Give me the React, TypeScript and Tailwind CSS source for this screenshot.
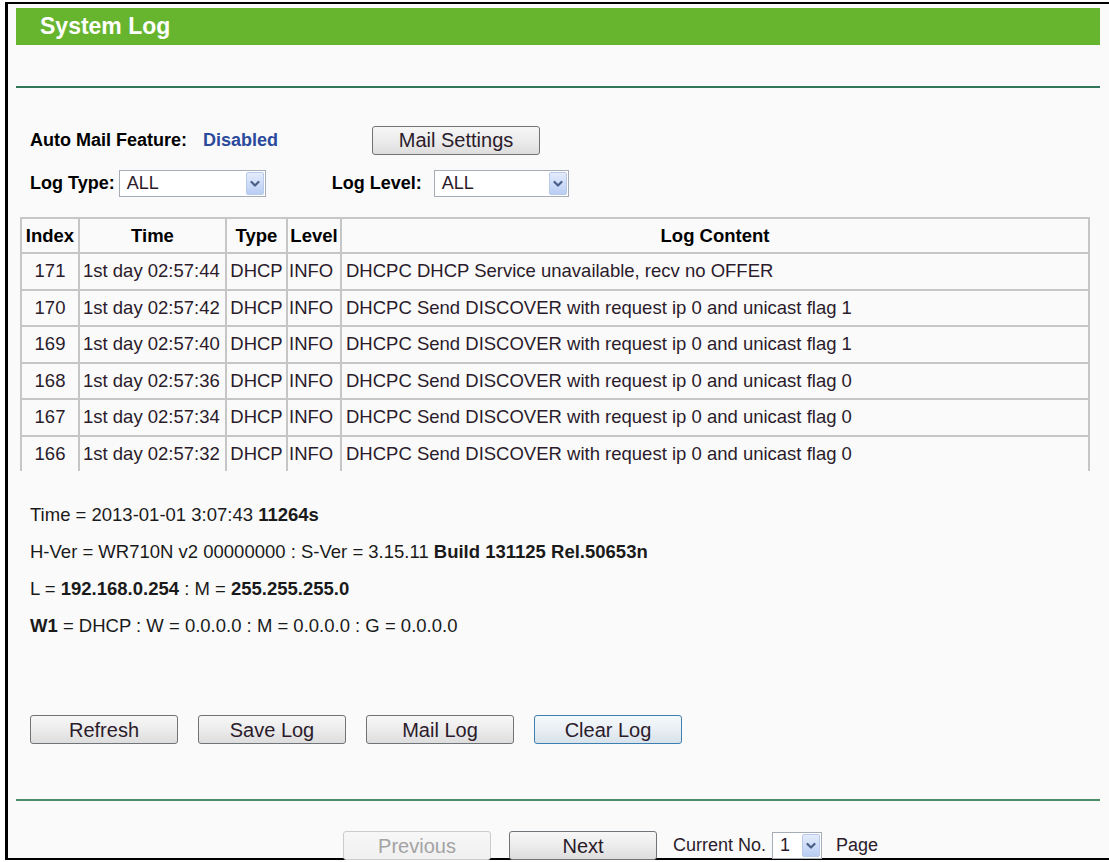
import React from 'react'

const rows = [
  { idx: '171', time: '1st day 02:57:44', msg: 'DHCPC DHCP Service unavailable, recv no OFFER' },
  { idx: '170', time: '1st day 02:57:42', msg: 'DHCPC Send DISCOVER with request ip 0 and unicast flag 1' },
  { idx: '169', time: '1st day 02:57:40', msg: 'DHCPC Send DISCOVER with request ip 0 and unicast flag 1' },
  { idx: '168', time: '1st day 02:57:36', msg: 'DHCPC Send DISCOVER with request ip 0 and unicast flag 0' },
  { idx: '167', time: '1st day 02:57:34', msg: 'DHCPC Send DISCOVER with request ip 0 and unicast flag 0' },
  { idx: '166', time: '1st day 02:57:32', msg: 'DHCPC Send DISCOVER with request ip 0 and unicast flag 0' },
]

function Chevron() {
  return (
    <svg width="10" height="8" viewBox="0 0 10 8" fill="none">
      <path d="M1.5 2 L5 5.5 L8.5 2" stroke="#4a5f87" strokeWidth="2.2" strokeLinecap="round" strokeLinejoin="round" />
    </svg>
  )
}

function Select({ value, width }: { value: string; width: string }) {
  return (
    <div className={`flex h-[27px] ${width} items-stretch border border-[#a7adb6] bg-white`}>
      <span className="flex-1 pl-[7px] text-[18px] leading-[25px] text-[#2b1b2b]">{value}</span>
      <span className="m-[1px] flex w-[18px] items-center justify-center rounded-[2px] border border-[#b8c9ea] bg-linear-to-b from-[#e4ecfc] to-[#b9cdf4]">
        <Chevron />
      </span>
    </div>
  )
}

function Button({ label, focused, disabled, width = 'w-[148px]' }: { label: string; focused?: boolean; disabled?: boolean; width?: string }) {
  const look = disabled
    ? 'border-[#c9cdd0] text-[#a3a3a3] from-[#f7f7f7] to-[#f0f0f0]'
    : focused
      ? 'border-[#3c7fb1] text-[#2b1b2b] from-[#f5f9fc] via-[#e9eff4] to-[#d8e2ea]'
      : 'border-[#6f7479] text-[#2b1b2b] from-[#f7f7f7] via-[#ececec] to-[#dddddd]'
  return (
    <button className={`h-[29px] ${width} rounded-[3px] border bg-linear-to-b text-[20px] leading-none ${look}`}>
      {label}
    </button>
  )
}

export default function App() {
  return (
    <div className="h-[862px] w-[1109px] bg-white pl-[5px] pt-[2px] font-['Liberation_Sans',Arial,sans-serif] text-black">
      <div className="h-[858px] border-b-[2px] border-l-[3px] border-t-[2px] border-black bg-[#fafafa] pl-[8px] pr-[1px] pt-[4px]">
        <div className="w-[1084px]">
          <div className="flex h-[37px] items-center bg-[#67b52f] pl-[24px] text-[23px] font-bold text-white">
            System Log
          </div>
          <div className="mt-[41px] h-[2px] bg-[#2f7659]" />

          <div className="mt-[38px] flex h-[29px] items-center pl-[14px] text-[18px]">
            <span className="font-bold">Auto Mail Feature:</span>
            <span className="ml-[16px] font-bold text-[#2b4a9c]">Disabled</span>
            <span className="ml-[94px]">
              <Button label="Mail Settings" width="w-[168px]" />
            </span>
          </div>

          <div className="mt-[15px] flex h-[27px] items-center pl-[14px] text-[18px]">
            <span className="font-bold">Log Type:</span>
            <span className="ml-[4px]">
              <Select value="ALL" width="w-[147px]" />
            </span>
            <span className="ml-[66px] font-bold">Log Level:</span>
            <span className="ml-[12px]">
              <Select value="ALL" width="w-[135px]" />
            </span>
          </div>

          <div className="ml-[4px] mt-[20px] h-[254px] w-[1070px] overflow-hidden">
            <table className="w-full border-collapse text-[18.5px] text-[#2b1b2b]">
              <thead>
                <tr className="h-[35px] font-bold text-black">
                  <th className="w-[58px] border-2 border-[#c6c6c6] text-center">Index</th>
                  <th className="w-[147px] border-2 border-[#c6c6c6] text-center">Time</th>
                  <th className="w-[61px] border-2 border-[#c6c6c6] text-center">Type</th>
                  <th className="w-[54px] border-2 border-[#c6c6c6] text-center">Level</th>
                  <th className="border-2 border-[#c6c6c6] text-center">Log Content</th>
                </tr>
              </thead>
              <tbody>
                {rows.map((r) => (
                  <tr key={r.idx} className="h-[36.5px]">
                    <td className="border-2 border-[#c6c6c6] text-center">{r.idx}</td>
                    <td className="border-2 border-[#c6c6c6] pl-[3px] whitespace-nowrap">{r.time}</td>
                    <td className="border-2 border-[#c6c6c6] text-center">DHCP</td>
                    <td className="border-2 border-[#c6c6c6] pl-[1px]">INFO</td>
                    <td className="border-2 border-[#c6c6c6] pl-[4px] whitespace-nowrap">{r.msg}</td>
                  </tr>
                ))}
              </tbody>
            </table>
          </div>

          <div className="mt-[33px] flex flex-col gap-[15px] pl-[14px] text-[18.5px] leading-[22px] text-[#1a1a1a]">
            <div>
              Time = 2013-01-01 3:07:43 <b>11264s</b>
            </div>
            <div>
              H-Ver = WR710N v2 00000000 : S-Ver = 3.15.11 <b>Build 131125 Rel.50653n</b>
            </div>
            <div>
              L = <b>192.168.0.254</b> : M = <b>255.255.255.0</b>
            </div>
            <div>
              <b>W1</b> = DHCP : W = 0.0.0.0 : M = 0.0.0.0 : G = 0.0.0.0
            </div>
          </div>

          <div className="mt-[78px] flex gap-[20px] pl-[14px]">
            <Button label="Refresh" />
            <Button label="Save Log" />
            <Button label="Mail Log" />
            <Button label="Clear Log" focused />
          </div>

          <div className="mt-[55px] h-[2px] bg-[#4a8f67]" />

          <div className="mt-[30px] flex items-center pl-[327px] text-[18px] text-[#2b1b2b]">
            <Button label="Previous" disabled />
            <span className="ml-[18px]">
              <Button label="Next" />
            </span>
            <span className="ml-[16px]">Current No.</span>
            <span className="ml-[6px]">
              <Select value="1" width="w-[50px]" />
            </span>
            <span className="ml-[14px]">Page</span>
          </div>
        </div>
      </div>
    </div>
  )
}
